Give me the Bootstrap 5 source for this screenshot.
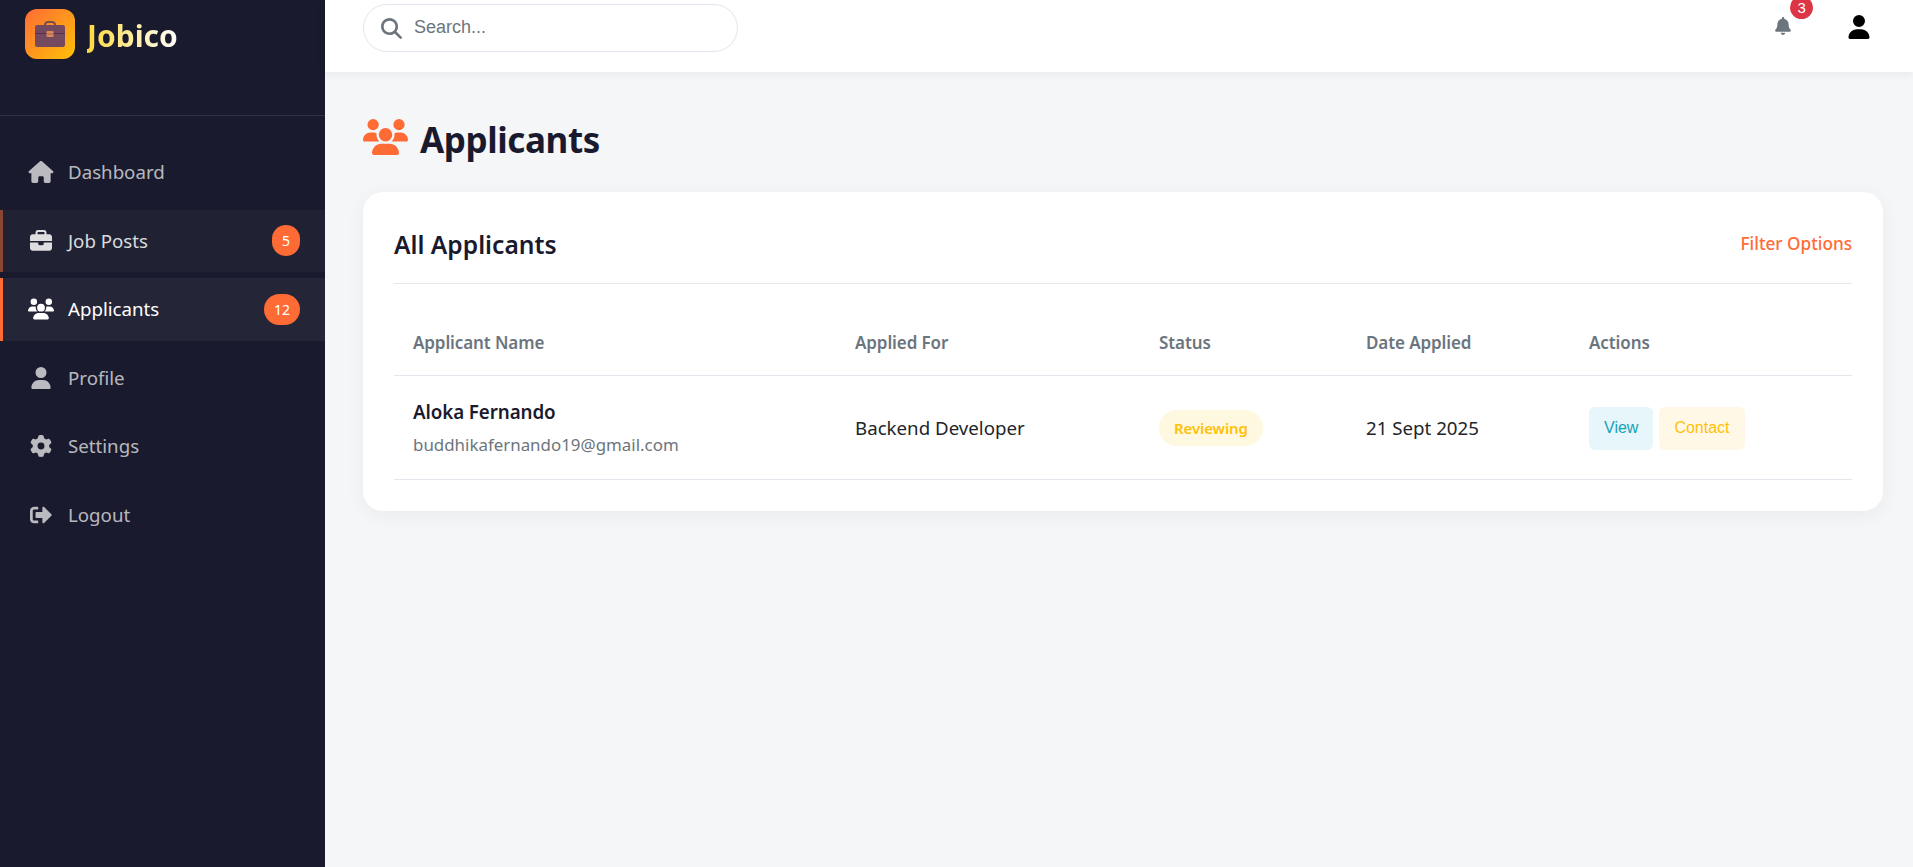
<!DOCTYPE html>
<html lang="en">
<head>
<meta charset="utf-8">
<title>Jobico - Applicants</title>
<link href="https://cdn.jsdelivr.net/npm/bootstrap@5.3.0/dist/css/bootstrap.min.css" rel="stylesheet">
<style>
html,body{height:867px;overflow:hidden}
body{font-family:"Noto Sans","Open Sans",sans-serif;background:#f5f6f8;color:#1a1a2e}
.app-shell{height:867px}
.side-bar{width:325px;flex:0 0 325px;background:#1a1a2e}
.brand-zone{height:116px;padding:9px 0 0 25px;border-bottom:1px solid #31314a;gap:12px}
.brand-tile{width:50px;height:50px;border-radius:12px;background:linear-gradient(135deg,#ff6b35,#ffc107)}
.brand-word{font-size:30px;font-weight:700;line-height:54px;height:50px;background:linear-gradient(90deg,#ffd93d,#fff);-webkit-background-clip:text;background-clip:text;color:transparent}
.side-menu{padding-top:25px;gap:6px}
.side-link{height:62.5px;border-left:3px solid transparent;padding:0 25px;color:rgba(255,255,255,.7);font-size:18.7px;text-decoration:none;gap:14px}
.side-link svg{width:26px;height:22px;fill:currentColor;flex:0 0 26px}
.side-link.is-hover{background:rgba(255,255,255,.03);border-left-color:#8a4630;color:rgba(255,255,255,.85)}
.side-link.is-on{background:rgba(255,255,255,.05);border-left-color:#ff6b35;color:#fff}
.count-pill{margin-left:auto;background:#ff6b35;color:#fff;font-size:14px;height:31px;min-width:28px;padding:0 10px;border-radius:16px;line-height:31px;text-align:center}
.top-bar{height:72px;background:#fff;box-shadow:0 2px 10px rgba(0,0,0,.06);padding:4px 42px 0 38px;position:relative;z-index:2}
.search-pill{width:375px;height:48px;border:1px solid #e2e6ee;border-radius:24px;padding:0 17px;gap:12px}
.search-pill svg{width:21px;height:21px;fill:#6c757d;flex:none}
.search-pill input{border:0;outline:0;flex:1;min-width:0;font-family:"Liberation Sans",sans-serif;font-size:18px;padding:0;margin-bottom:1px}
.search-pill input::placeholder{color:#6c757d;opacity:1}
.top-tools{height:48px}
.bell-wrap{position:relative;width:16px;height:24px;margin:0 56px 4px 0}
.bell-wrap svg{width:16px;height:18px;fill:#6c757d;display:block;margin-top:3px}
.bell-num{position:absolute;left:15px;top:-18px;width:23px;height:23px;border-radius:50%;background:#dc3545;color:#fff;font:15px/23px "Liberation Sans",sans-serif;text-align:center}
.user-glyph{width:24px;height:24px;fill:#000;margin-bottom:2px}
.page-zone{padding:46px 30px 0 38px}
.page-head{font-size:35px;font-weight:700;line-height:44px;height:74px;margin:0;gap:12px;letter-spacing:-.4px}
.page-head svg{width:45px;height:36px;fill:#ff6b35;margin-top:1px}
.sheet{border:0;border-radius:20px;background:#fff;box-shadow:0 4px 20px rgba(0,0,0,.05);padding:30px 31px 31px}
.sheet-head{height:62px;border-bottom:1px solid #e5e7ee;padding-bottom:16px}
.sheet-title{font-size:24.6px;font-weight:600;margin:0;line-height:30px}
.filter-link{color:#ff6b35;font-size:17.2px;font-weight:500;text-decoration:none;margin-bottom:2px}
.apps-table{margin:26px 0 0;table-layout:fixed;width:100%}
.col-name{width:442px}.col-role{width:304px}.col-state{width:207px}.col-date{width:223px}
.apps-table th{height:65px;padding:0 19px;vertical-align:middle;color:#6c757d;font-size:17px;font-weight:600;border-bottom:1px solid #e5e7ee;letter-spacing:-.1px}
.apps-table td{height:104px;padding:2px 19px 0;vertical-align:middle;font-size:18.7px;color:#212529;border-bottom:1px solid #e5e7ee}
.person-name{font-weight:600;font-size:18.8px;color:#1a1a2e;line-height:24px;margin-bottom:9px;letter-spacing:-.1px}
.person-mail{font-size:16.9px;color:#6c757d;line-height:24px}
.state-chip{display:inline-block;background:#fff8e1;color:#ffc107;font-size:15px;font-weight:600;line-height:36px;height:36px;padding:0 15px;border-radius:18px;letter-spacing:-.1px}
.act-btn{font:16px/1.5 "Liberation Sans",sans-serif;height:43px;padding:0 15px;border:0;border-radius:6px}
.act-view{background:#e6f6fa;color:#17a2b8;margin-right:6px}
.act-contact{background:#fff8e6;color:#ffc107}
</style>
</head>
<body>
<div class="app-shell d-flex">
  <aside class="side-bar d-flex flex-column">
    <div class="brand-zone d-flex align-items-start">
      <div class="brand-tile d-flex align-items-center justify-content-center">
        <svg width="32" height="28" viewBox="0 0 32 28" aria-hidden="true"><path d="M11 6V4.5A3 3 0 0 1 14 2h4a3 3 0 0 1 3 2.5V6" fill="none" stroke="#7d4a4d" stroke-width="2"/><rect x="1" y="5" width="30" height="22" rx="2" fill="#754a5e"/><path d="M1 13.5h30" stroke="#5a2f52" stroke-width="1"/><rect x="12.5" y="11" width="7" height="6" rx="1" fill="#d98a58"/><path d="M12.5 14h7" stroke="#a8654e" stroke-width="1"/></svg>
      </div>
      <div class="brand-word">Jobico</div>
    </div>
    <nav class="side-menu d-flex flex-column">
      <a class="side-link d-flex align-items-center" href="#"><svg viewBox="0 0 576 512"><path d="M575.8 255.5c0 18-15 32.1-32 32.1h-32l.7 160.2c0 2.7-.2 5.4-.5 8.1V472c0 22.1-17.9 40-40 40H456c-1.1 0-2.2 0-3.3-.1c-1.4 .1-2.8 .1-4.2 .1H416 392c-22.1 0-40-17.9-40-40V448 384c0-17.7-14.3-32-32-32H256c-17.7 0-32 14.3-32 32v64 24c0 22.1-17.9 40-40 40H160 128.1c-1.5 0-3-.1-4.5-.2c-1.2 .1-2.4 .2-3.6 .2H104c-22.1 0-40-17.9-40-40V360c0-.9 0-1.9 .1-2.8V287.6H32c-18 0-32-14-32-32.1c0-9 3-17 10-24L266.4 8c7-7 15-8 22-8s15 2 21 7L564.8 231.5c8 7 12 15 11 24z"/></svg>Dashboard</a>
      <a class="side-link is-hover d-flex align-items-center" href="#"><svg viewBox="0 0 512 512"><path d="M184 48H328c4.4 0 8 3.6 8 8V96H176V56c0-4.4 3.6-8 8-8zm-56 8V96H64C28.7 96 0 124.7 0 160v96H192 320 512V160c0-35.3-28.7-64-64-64H384V56c0-30.9-25.1-56-56-56H184c-30.9 0-56 25.1-56 56zM512 288H320v32c0 17.7-14.3 32-32 32H224c-17.7 0-32-14.3-32-32V288H0V416c0 35.3 28.7 64 64 64H448c35.3 0 64-28.7 64-64V288z"/></svg>Job Posts<span class="count-pill">5</span></a>
      <a class="side-link is-on d-flex align-items-center" href="#"><svg viewBox="0 0 640 512"><path d="M144 0a80 80 0 1 1 0 160A80 80 0 1 1 144 0zM512 0a80 80 0 1 1 0 160A80 80 0 1 1 512 0zM0 298.7C0 239.8 47.8 192 106.7 192h42.7c15.9 0 31 3.5 44.6 9.7c-1.3 7.2-1.9 14.7-1.9 22.3c0 38.2 16.8 72.5 43.3 96c-.2 0-.4 0-.7 0H21.3C9.6 320 0 310.4 0 298.7zM405.3 320c-.2 0-.4 0-.7 0c26.6-23.5 43.3-57.8 43.3-96c0-7.6-.7-15-1.9-22.3c13.6-6.3 28.7-9.7 44.6-9.7h42.7C592.2 192 640 239.8 640 298.7c0 11.8-9.6 21.3-21.3 21.3H405.3zM224 224a96 96 0 1 1 192 0 96 96 0 1 1 -192 0zM128 485.3C128 411.7 187.7 352 261.3 352H378.7C452.3 352 512 411.7 512 485.3c0 14.7-11.9 26.7-26.7 26.7H154.7c-14.7 0-26.7-11.9-26.7-26.7z"/></svg>Applicants<span class="count-pill">12</span></a>
      <a class="side-link d-flex align-items-center" href="#"><svg viewBox="0 0 448 512"><path d="M224 256A128 128 0 1 0 224 0a128 128 0 1 0 0 256zm-45.7 48C79.8 304 0 383.8 0 482.3C0 498.7 13.3 512 29.7 512H418.3c16.4 0 29.7-13.3 29.7-29.7C448 383.8 368.2 304 269.7 304H178.3z"/></svg>Profile</a>
      <a class="side-link d-flex align-items-center" href="#"><svg viewBox="0 0 512 512"><path d="M495.9 166.6c3.2 8.7 .5 18.4-6.4 24.6l-43.3 39.4c1.1 8.3 1.7 16.8 1.7 25.4s-.6 17.1-1.7 25.4l43.3 39.4c6.9 6.2 9.6 15.9 6.4 24.6c-4.4 11.9-9.7 23.3-15.8 34.3l-4.7 8.1c-6.6 11-14 21.4-22.1 31.2c-5.9 7.2-15.7 9.6-24.5 6.8l-55.7-17.7c-13.4 10.3-28.2 18.9-44 25.4l-12.5 57.1c-2 9.1-9 16.3-18.2 17.8c-13.8 2.3-28 3.5-42.5 3.5s-28.7-1.2-42.5-3.5c-9.2-1.5-16.2-8.7-18.2-17.8l-12.5-57.1c-15.8-6.5-30.6-15.1-44-25.4L83.1 425.9c-8.8 2.8-18.6 .3-24.5-6.8c-8.1-9.8-15.5-20.2-22.1-31.2l-4.7-8.1c-6.1-11-11.4-22.4-15.8-34.3c-3.2-8.7-.5-18.4 6.4-24.6l43.3-39.4C64.6 273.1 64 264.6 64 256s.6-17.1 1.7-25.4L22.4 191.2c-6.9-6.2-9.6-15.9-6.4-24.6c4.4-11.9 9.7-23.3 15.8-34.3l4.7-8.1c6.6-11 14-21.4 22.1-31.2c5.9-7.2 15.7-9.6 24.5-6.8l55.7 17.7c13.4-10.3 28.2-18.9 44-25.4l12.5-57.1c2-9.1 9-16.3 18.2-17.8C227.3 1.2 241.5 0 256 0s28.7 1.2 42.5 3.5c9.2 1.5 16.2 8.7 18.2 17.8l12.5 57.1c15.8 6.5 30.6 15.1 44 25.4l55.7-17.7c8.8-2.8 18.6-.3 24.5 6.8c8.1 9.8 15.5 20.2 22.1 31.2l4.7 8.1c6.1 11 11.4 22.4 15.8 34.3zM256 336a80 80 0 1 0 0-160 80 80 0 1 0 0 160z"/></svg>Settings</a>
      <a class="side-link d-flex align-items-center" href="#"><svg viewBox="0 0 512 512"><path d="M497 273L329 441c-15 15-41 4.5-41-17v-96H152c-13.3 0-24-10.7-24-24v-96c0-13.3 10.7-24 24-24h136V88c0-21.4 25.9-32 41-17l168 168c9.3 9.4 9.3 24.6 0 34zM192 436v-40c0-6.6-5.4-12-12-12H96c-17.7 0-32-14.3-32-32V160c0-17.7 14.3-32 32-32h84c6.6 0 12-5.4 12-12V76c0-6.6-5.4-12-12-12H96c-53 0-96 43-96 96v192c0 53 43 96 96 96h84c6.6 0 12-5.4 12-12z"/></svg>Logout</a>
    </nav>
  </aside>
  <div class="flex-grow-1 d-flex flex-column">
    <header class="top-bar d-flex justify-content-between align-items-start">
      <div class="search-pill d-flex align-items-center">
        <svg viewBox="0 0 512 512"><path d="M416 208c0 45.9-14.9 88.3-40 122.7L502.6 457.4c12.5 12.5 12.5 32.8 0 45.3s-32.8 12.5-45.3 0L330.7 376c-34.4 25.2-76.8 40-122.7 40C93.1 416 0 322.9 0 208S93.1 0 208 0S416 93.1 416 208zM208 352a144 144 0 1 0 0-288 144 144 0 1 0 0 288z"/></svg>
        <input type="text" placeholder="Search...">
      </div>
      <div class="top-tools d-flex align-items-center">
        <div class="bell-wrap">
          <svg viewBox="0 0 448 512"><path d="M224 0c-17.7 0-32 14.3-32 32V51.2C119 66 64 130.6 64 208v18.8c0 47-17.3 92.4-48.5 127.6l-7.4 8.3c-8.4 9.4-10.4 22.9-5.3 34.4S19.4 416 32 416H416c12.6 0 24-7.4 29.2-18.9s3.1-25-5.3-34.4l-7.4-8.3C401.3 319.2 384 273.9 384 226.8V208c0-77.4-55-142-128-156.8V32c0-17.7-14.3-32-32-32zm45.3 493.3c12-12 18.7-28.3 18.7-45.3H224 160c0 17 6.7 33.3 18.7 45.3s28.3 18.7 45.3 18.7s33.3-6.7 45.3-18.7z"/></svg>
          <span class="bell-num">3</span>
        </div>
        <svg class="user-glyph" viewBox="0 0 448 512"><path d="M224 256A128 128 0 1 0 224 0a128 128 0 1 0 0 256zm-45.7 48C79.8 304 0 383.8 0 482.3C0 498.7 13.3 512 29.7 512H418.3c16.4 0 29.7-13.3 29.7-29.7C448 383.8 368.2 304 269.7 304H178.3z"/></svg>
      </div>
    </header>
    <main class="page-zone flex-grow-1">
      <h1 class="page-head d-flex align-items-start"><svg viewBox="0 0 640 512"><path d="M144 0a80 80 0 1 1 0 160A80 80 0 1 1 144 0zM512 0a80 80 0 1 1 0 160A80 80 0 1 1 512 0zM0 298.7C0 239.8 47.8 192 106.7 192h42.7c15.9 0 31 3.5 44.6 9.7c-1.3 7.2-1.9 14.7-1.9 22.3c0 38.2 16.8 72.5 43.3 96c-.2 0-.4 0-.7 0H21.3C9.6 320 0 310.4 0 298.7zM405.3 320c-.2 0-.4 0-.7 0c26.6-23.5 43.3-57.8 43.3-96c0-7.6-.7-15-1.9-22.3c13.6-6.3 28.7-9.7 44.6-9.7h42.7C592.2 192 640 239.8 640 298.7c0 11.8-9.6 21.3-21.3 21.3H405.3zM224 224a96 96 0 1 1 192 0 96 96 0 1 1 -192 0zM128 485.3C128 411.7 187.7 352 261.3 352H378.7C452.3 352 512 411.7 512 485.3c0 14.7-11.9 26.7-26.7 26.7H154.7c-14.7 0-26.7-11.9-26.7-26.7z"/></svg>Applicants</h1>
      <section class="card sheet">
        <div class="sheet-head d-flex justify-content-between align-items-center">
          <h2 class="sheet-title">All Applicants</h2>
          <a class="filter-link" href="#">Filter Options</a>
        </div>
        <table class="table apps-table">
          <colgroup><col class="col-name"><col class="col-role"><col class="col-state"><col class="col-date"><col></colgroup>
          <thead><tr><th>Applicant Name</th><th>Applied For</th><th>Status</th><th>Date Applied</th><th>Actions</th></tr></thead>
          <tbody><tr>
            <td><div class="person-name">Aloka Fernando</div><div class="person-mail">buddhikafernando19@gmail.com</div></td>
            <td>Backend Developer</td>
            <td><span class="state-chip">Reviewing</span></td>
            <td>21 Sept 2025</td>
            <td><button class="btn act-btn act-view">View</button><button class="btn act-btn act-contact">Contact</button></td>
          </tr></tbody>
        </table>
      </section>
    </main>
  </div>
</div>
<script src="https://cdn.jsdelivr.net/npm/bootstrap@5.3.0/dist/js/bootstrap.bundle.min.js"></script>
</body>
</html>
